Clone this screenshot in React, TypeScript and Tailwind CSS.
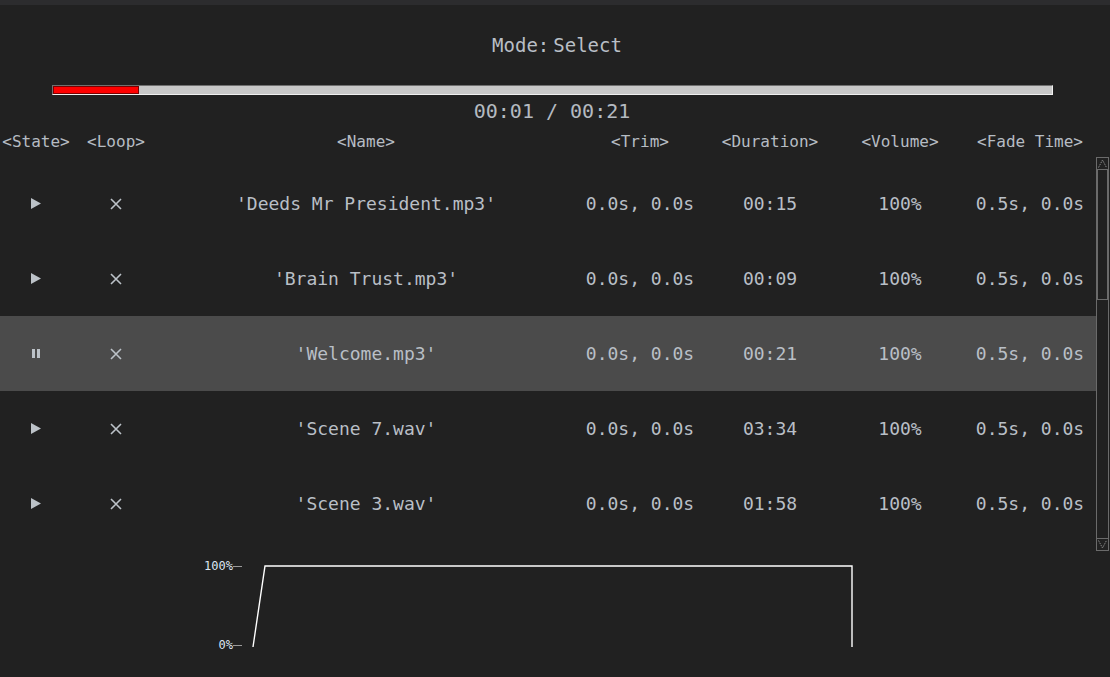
import React from 'react';

type Track = {
  playing: boolean;
  name: string;
  trim: string;
  duration: string;
  volume: string;
  fade: string;
};

const tracks: Track[] = [
  { playing: false, name: "'Deeds Mr President.mp3'", trim: '0.0s, 0.0s', duration: '00:15', volume: '100%', fade: '0.5s, 0.0s' },
  { playing: false, name: "'Brain Trust.mp3'", trim: '0.0s, 0.0s', duration: '00:09', volume: '100%', fade: '0.5s, 0.0s' },
  { playing: true, name: "'Welcome.mp3'", trim: '0.0s, 0.0s', duration: '00:21', volume: '100%', fade: '0.5s, 0.0s' },
  { playing: false, name: "'Scene 7.wav'", trim: '0.0s, 0.0s', duration: '03:34', volume: '100%', fade: '0.5s, 0.0s' },
  { playing: false, name: "'Scene 3.wav'", trim: '0.0s, 0.0s', duration: '01:58', volume: '100%', fade: '0.5s, 0.0s' },
];

const cols = 'grid grid-cols-[72px_88px_412px_136px_124px_136px_124px]';

function PlayIcon() {
  return (
    <svg width="10" height="11" viewBox="0 0 10 11">
      <path d="M0 0 L10 5.5 L0 11 Z" fill="#bcc2c8" />
    </svg>
  );
}

function PauseIcon() {
  return (
    <svg width="8" height="9" viewBox="0 0 8 9">
      <rect x="0" y="0" width="3" height="9" fill="#bcc2c8" />
      <rect x="5" y="0" width="3" height="9" fill="#bcc2c8" />
    </svg>
  );
}

function CrossIcon() {
  return (
    <svg width="12" height="12" viewBox="0 0 12 12">
      <path d="M1 1 L11 11 M11 1 L1 11" stroke="#bcc2c8" strokeWidth="1.6" />
    </svg>
  );
}

function Scrollbar() {
  return (
    <svg width="13" height="394" viewBox="0 0 13 394" className="shrink-0">
      <rect x="0.5" y="0.5" width="12" height="393" fill="none" stroke="#6b6b6b" />
      <rect x="0.5" y="0.5" width="12" height="12" fill="none" stroke="#6b6b6b" />
      <path d="M2.5 10.5 L6.5 3 L10.5 10.5" fill="none" stroke="#8a8a8a" strokeDasharray="1.5 1" />
      <rect x="1.5" y="12.5" width="10" height="130" fill="none" stroke="#6b6b6b" />
      <rect x="0.5" y="381.5" width="12" height="12" fill="none" stroke="#6b6b6b" />
      <path d="M2.5 383.5 L6.5 391 L10.5 383.5" fill="none" stroke="#8a8a8a" strokeDasharray="1.5 1" />
    </svg>
  );
}

export default function App() {
  const progress = 86;

  return (
    <div className="w-[1110px] h-[677px] bg-[#212121] overflow-hidden flex flex-col text-[#b9bfc6] font-['DejaVu_Sans_Mono',monospace]">
      <div className="h-[5px] bg-[#2c2c2e] shrink-0" />

      <div className="mt-[28px] pl-[4px] text-center text-[19px] leading-[24px]">
        Mode:<span className="ml-[4px]">Select</span>
      </div>

      <div className="mt-[28px] ml-[52px] w-[1001px] h-[10px] border border-[#f0f0f0] border-t-[#707070] border-l-[#707070] bg-[#c8c8c8] flex">
        <div
          className="h-full bg-[#ff0000] border border-[#7a0000]"
          style={{ width: `${progress}px` }}
        />
      </div>

      <div className="mt-[4px] pr-[6px] text-center text-[20px] leading-[24px] text-[#b4bac0]">00:01 / 00:21</div>

      <div className={`${cols} mt-[9px] text-[16px] leading-[20px] text-center text-[#b6bcc3]`}>
        <div>&lt;State&gt;</div>
        <div>&lt;Loop&gt;</div>
        <div>&lt;Name&gt;</div>
        <div>&lt;Trim&gt;</div>
        <div>&lt;Duration&gt;</div>
        <div>&lt;Volume&gt;</div>
        <div>&lt;Fade Time&gt;</div>
      </div>

      <div className="mt-[5px] flex h-[394px]">
        <div className="w-[1096px] pt-[9px] flex flex-col">
          {tracks.map((t) => (
            <div
              key={t.name}
              className={`${cols} h-[75px] items-center text-center text-[18px] ${t.playing ? 'bg-[#4b4b4b]' : ''}`}
            >
              <div className="flex justify-center">{t.playing ? <PauseIcon /> : <PlayIcon />}</div>
              <div className="flex justify-center"><CrossIcon /></div>
              <div>{t.name}</div>
              <div>{t.trim}</div>
              <div>{t.duration}</div>
              <div>{t.volume}</div>
              <div className="whitespace-nowrap">{t.fade}</div>
            </div>
          ))}
        </div>
        <Scrollbar />
      </div>

      <div className="mt-[8px] ml-[190px] flex">
        <div className="w-[52px] h-[93px] flex flex-col justify-between text-[12px] leading-[14px] text-[#dde6f2]">
          <div className="flex items-center justify-end">
            <span>100%</span>
            <span className="w-[9px] h-px bg-[#9a9a9a]" />
          </div>
          <div className="flex items-center justify-end">
            <span>0%</span>
            <span className="w-[9px] h-px bg-[#9a9a9a]" />
          </div>
        </div>
        <svg width="620" height="93" viewBox="0 0 620 93">
          <polyline points="11,88 23,7 610,7 610,88" fill="none" stroke="#ffffff" strokeWidth="1.4" />
        </svg>
      </div>
    </div>
  );
}
